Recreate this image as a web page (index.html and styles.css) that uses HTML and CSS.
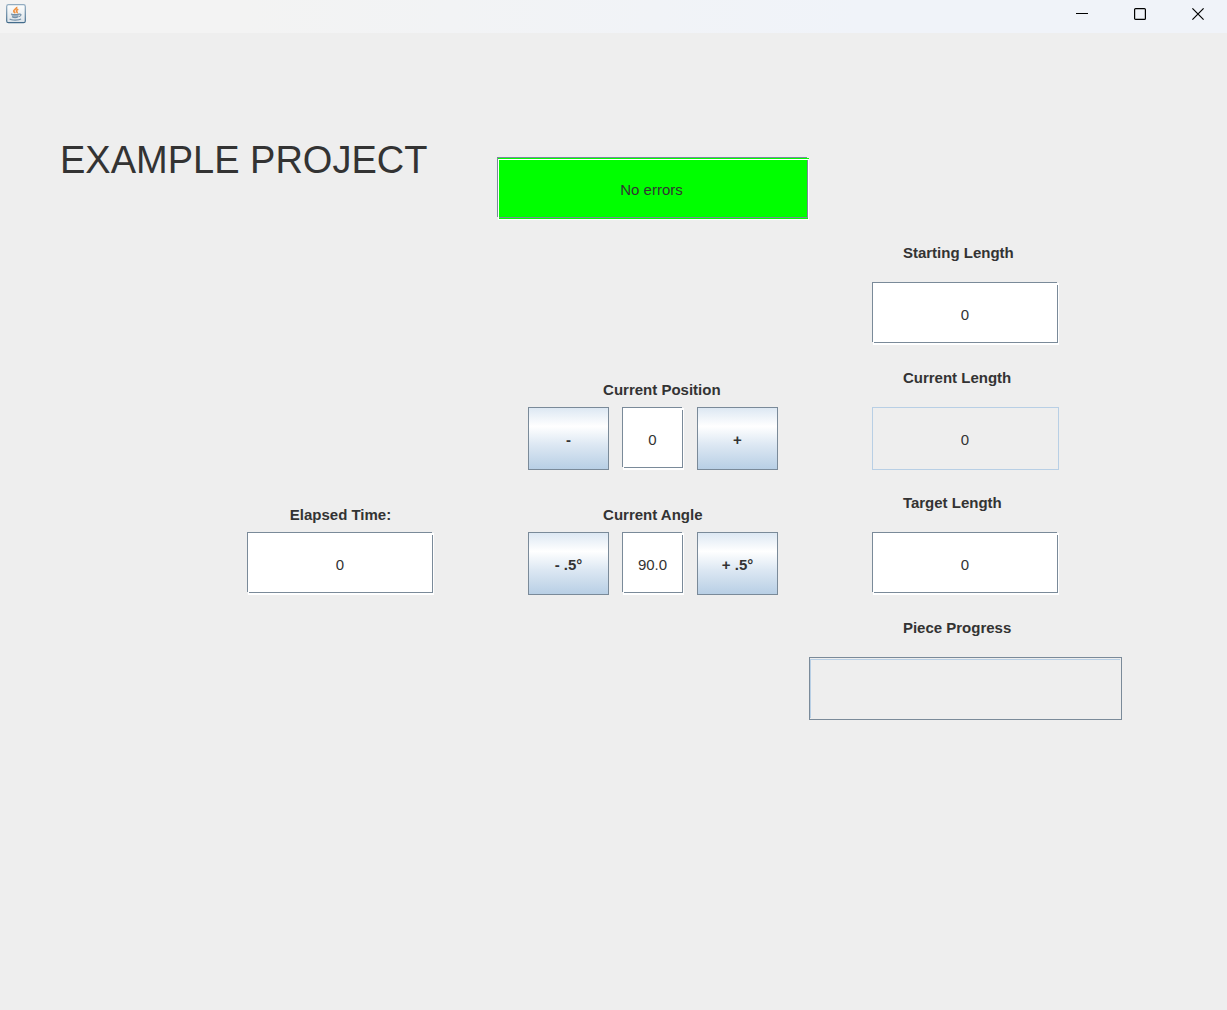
FILE: index.html
```html
<!DOCTYPE html>
<html lang="en">
<head>
<meta charset="utf-8">
<title>Example Project</title>
<link rel="stylesheet" href="styles.css">
</head>
<body>
<header class="titlebar">
  <svg class="app-icon" width="20" height="20" viewBox="0 0 20 20" aria-hidden="true">
    <defs>
      <linearGradient id="tile" x1="0" y1="0" x2="0" y2="1">
        <stop offset="0" stop-color="#fdfefe"/>
        <stop offset="1" stop-color="#dce3e9"/>
      </linearGradient>
      <linearGradient id="rim" x1="0" y1="0" x2="0" y2="1">
        <stop offset="0" stop-color="#92acc1"/>
        <stop offset="1" stop-color="#426b8b"/>
      </linearGradient>
    </defs>
    <rect x=".7" y=".7" width="18.6" height="18" rx="1.8" fill="url(#tile)" stroke="url(#rim)" stroke-width="1.2"/>
    <path d="M10.600 2.800c1 1.800-3.600 2.800-2.800 4.600.3.800 1.100 1.200 1.300 1.900M12.300 5.200c-2.200.9-2.200 1.800-1.400 2.600.4.400.2.900-.2 1.300" fill="none" stroke="#f0913f" stroke-width="1.700"/>
    <path d="M5 9.800c2.400.8 5.600.8 8 0l-.8 3.200c-1.500 1.100-4.600 1.100-6 0z" fill="#9fb2c2"/>
    <path d="M5 10c2.400.7 5.600.7 8 0M6 12.800c1.600.8 4.600.8 6 0M13 10.200c2.800-.6 2.600 1.800-.4 2.400M3.600 14.900c1.500 1.500 9.600 1.500 11.400.1" fill="none" stroke="#7390a8" stroke-width="1.200"/>
  </svg>
  <div class="window-controls">
    <button class="window-button" type="button" aria-label="Minimize">
      <svg width="12" height="12" viewBox="0 0 12 12"><path d="M0 5.500h12" stroke="#000"/></svg>
    </button>
    <button class="window-button" type="button" aria-label="Maximize">
      <svg width="12" height="12" viewBox="0 0 12 12"><rect x=".6" y=".6" width="10.800" height="10.800" rx="1" fill="none" stroke="#000" stroke-width="1.200"/></svg>
    </button>
    <button class="window-button" type="button" aria-label="Close">
      <svg width="12" height="12" viewBox="0 0 12 12"><path d="M.4.4l11.200 11.200M11.600.4L.4 11.600" stroke="#000" stroke-width="1.200"/></svg>
    </button>
  </div>
</header>

<main class="panel">
  <section class="column overview">
    <h1 class="title">EXAMPLE PROJECT</h1>
    <label class="caption elapsed-caption" for="elapsed">Elapsed Time:</label>
    <input class="field elapsed-field" id="elapsed" type="text" value="0">
  </section>

  <section class="column motion">
    <input class="status" type="text" value="No errors" aria-label="Status" readonly>
    <label class="caption position-caption" for="position">Current Position</label>
    <div class="stepper position-stepper">
      <button class="step" type="button">-</button>
      <input class="field" id="position" type="text" value="0">
      <button class="step" type="button">+</button>
    </div>
    <label class="caption angle-caption" for="angle">Current Angle</label>
    <div class="stepper angle-stepper">
      <button class="step" type="button">- .5°</button>
      <input class="field" id="angle" type="text" value="90.0">
      <button class="step" type="button">+ .5°</button>
    </div>
  </section>

  <section class="column lengths">
    <label class="caption" for="starting">Starting Length</label>
    <input class="field" id="starting" type="text" value="0">
    <label class="caption" for="current">Current Length</label>
    <input class="field locked" id="current" type="text" value="0" readonly>
    <label class="caption" for="target">Target Length</label>
    <input class="field" id="target" type="text" value="0">
    <label class="caption" for="progress">Piece Progress</label>
    <progress class="progress" id="progress" value="0" max="100"></progress>
  </section>
</main>
</body>
</html>
```

FILE: styles.css
```css
:root {
  --face: #eeeeee;
  --edge: #7a8a99;
  --soft-edge: #b8cfe5;
  --text: #333333;
}

* {
  box-sizing: border-box;
}

body {
  margin: 0;
  min-height: 100vh;
  background: var(--face);
  color: var(--text);
  font: 15px/18px "Liberation Sans", Arial, sans-serif;
}

input,
button {
  margin: 0;
  border: 0;
  border-radius: 0;
  color: inherit;
  font: inherit;
}

/* Window title bar */

.titlebar {
  display: flex;
  justify-content: space-between;
  height: 33px;
  padding-left: 6px;
  background: linear-gradient(90deg, #f3f3f3 20%, #f0f3f9 70%);
}

.app-icon {
  margin-top: 4px;
}

.window-controls {
  display: flex;
  height: 28px;
}

.window-button {
  display: flex;
  align-items: center;
  justify-content: center;
  width: 58px;
  padding: 0;
  background: none;
}

/* Control panel: three columns on a shared row rhythm */

.panel {
  display: grid;
  grid-template-columns: minmax(0, 437fr) minmax(0, 312fr) minmax(0, 313fr);
  padding: 62px 105px 62px 60px;
}

.column {
  display: grid;
  grid-template-rows: repeat(5, 62px 63px);
  min-width: 0;
}

.title {
  grid-row: 1 / 3;
  margin: 43px 0 0;
  font-size: 38px;
  font-weight: 400;
  line-height: 44px;
  white-space: nowrap;
}

.caption {
  align-self: end;
  padding-bottom: 8px;
  font-weight: 700;
  white-space: nowrap;
}

/* Sunken text field: dark line with a white line below and to the right */

.field {
  width: 100%;
  min-width: 0;
  height: 63px;
  padding: 2px 1px 0 0;
  text-align: center;
  background:
    linear-gradient(var(--face), var(--face)) right top / 1px 1px,
    linear-gradient(var(--edge), var(--edge)) left top / calc(100% - 2px) 1px,
    linear-gradient(var(--edge), var(--edge)) left top / 1px calc(100% - 3px),
    linear-gradient(var(--edge), var(--edge)) right 1px bottom 2px / calc(100% - 3px) 1px,
    linear-gradient(var(--edge), var(--edge)) right 1px bottom 2px / 1px calc(100% - 5px),
    linear-gradient(#fff, #fff) right bottom / calc(100% - 1px) calc(100% - 1px);
  background-repeat: no-repeat;
}

.locked {
  border: 1px solid var(--soft-edge);
  background: var(--face);
}

.status {
  grid-row: 2;
  width: 100%;
  padding: 2px 3px 0 0;
  text-align: center;
  background:
    linear-gradient(var(--edge), var(--edge)) left top / calc(100% - 2px) 1px,
    linear-gradient(var(--edge), var(--edge)) left top / 1px calc(100% - 3px),
    linear-gradient(var(--edge), var(--edge)) right 1px bottom 2px / calc(100% - 3px) 1px,
    linear-gradient(var(--edge), var(--edge)) right 1px bottom 2px / 1px calc(100% - 5px),
    linear-gradient(#fff, #fff) right bottom / calc(100% - 2px) 1px,
    linear-gradient(#fff, #fff) right bottom / 1px calc(100% - 2px),
    linear-gradient(#fff, #fff) 1px 2px / 100% 1px,
    linear-gradient(#fff, #fff) 1px 2px / 1px 100%,
    linear-gradient(#0f0, #0f0) right bottom / calc(100% - 1px) calc(100% - 1px);
  background-repeat: no-repeat;
}

.elapsed-caption {
  grid-row: 7;
}

.elapsed-field {
  grid-row: 8;
}

.elapsed-caption,
.elapsed-field {
  margin-left: 187px;
  width: calc(100% - 250px);
  text-align: center;
}

.position-caption,
.angle-caption {
  padding-left: 34%;
}

.position-caption {
  grid-row: 5;
}

.position-stepper {
  grid-row: 6;
}

.angle-caption {
  grid-row: 7;
}

.angle-stepper {
  grid-row: 8;
}

.stepper {
  display: grid;
  grid-template-columns: minmax(0, 81fr) minmax(0, 62fr) minmax(0, 81fr);
  gap: 13px;
  padding: 0 31px;
}

.step {
  height: 63px;
  padding: 2px 0 0;
  border: 1px solid var(--edge);
  background: linear-gradient(#dde8f3, #fff 30%, #dde8f3 60%, #b8cfe5);
  font-weight: 700;
  white-space: nowrap;
}

/* The lengths start one caption row below the status field */

.lengths {
  grid-template-rows: repeat(4, 62px 63px);
  margin-top: 125px;
}

.lengths .caption {
  align-self: center;
  padding: 4px 0 0 30%;
}

.lengths .field {
  justify-self: center;
  width: calc(100% - 126px);
}

.progress {
  appearance: none;
  width: 100%;
  height: 63px;
  border: 1px solid var(--edge);
  background:
    linear-gradient(var(--soft-edge), var(--soft-edge)) 0 1px / calc(100% - 1px) 1px,
    linear-gradient(var(--soft-edge), var(--soft-edge)) 0 1px / 1px calc(100% - 2px);
  background-repeat: no-repeat;
}

.progress::-webkit-progress-bar {
  background: transparent;
}

.progress::-webkit-progress-value {
  background: #a3b8cc;
}
```
